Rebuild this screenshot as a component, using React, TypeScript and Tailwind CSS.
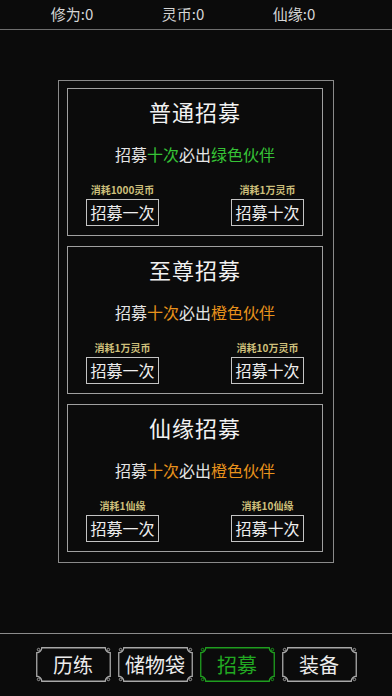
import React from 'react'

const FONT = { fontFamily: '"Noto Sans CJK SC", "Noto Sans", sans-serif' }

const GREEN = 'text-[#36c236]'
const ORANGE = 'text-[#e8921c]'

type Pool = {
  title: string
  color: 'green' | 'orange'
  prize: string
  costOne: string
  costTen: string
}

const pools: Pool[] = [
  { title: '普通招募', color: 'green', prize: '绿色伙伴', costOne: '消耗1000灵币', costTen: '消耗1万灵币' },
  { title: '至尊招募', color: 'orange', prize: '橙色伙伴', costOne: '消耗1万灵币', costTen: '消耗10万灵币' },
  { title: '仙缘招募', color: 'orange', prize: '橙色伙伴', costOne: '消耗1仙缘', costTen: '消耗10仙缘' },
]

function TabFrame({ stroke }: { stroke: string }) {
  const a = 0.75
  const W = 75 - a
  const H = 35 - a
  const r = 5
  const d = `M ${a + r} ${a} H ${W - r} A ${r} ${r} 0 0 0 ${W} ${a + r} V ${H - r} A ${r} ${r} 0 0 0 ${W - r} ${H} H ${a + r} A ${r} ${r} 0 0 0 ${a} ${H - r} V ${a + r} A ${r} ${r} 0 0 0 ${a + r} ${a} Z`
  return (
    <svg className="absolute inset-0" width="75" height="35" viewBox="0 0 75 35" fill="none">
      <path d={d} stroke={stroke} strokeWidth="1.3" />
      <circle cx="2.6" cy="2.6" r="1.3" stroke={stroke} strokeWidth="0.9" />
      <circle cx="72.4" cy="2.6" r="1.3" stroke={stroke} strokeWidth="0.9" />
      <circle cx="2.6" cy="32.4" r="1.3" stroke={stroke} strokeWidth="0.9" />
      <circle cx="72.4" cy="32.4" r="1.3" stroke={stroke} strokeWidth="0.9" />
    </svg>
  )
}

function Tab({ label, active }: { label: string; active?: boolean }) {
  return (
    <div className="relative w-[75px] h-[35px] flex items-center justify-center bg-[#0b0b0b]">
      <TabFrame stroke={active ? '#1f9e1f' : '#a8a8a8'} />
      <span className={`relative text-[20px] leading-none ${active ? 'text-[#22a822]' : 'text-[#ececec]'}`}>
        {label}
      </span>
    </div>
  )
}

function DrawButton({ cost, label }: { cost: string; label: string }) {
  return (
    <div className="flex flex-col items-center w-[73px]">
      <div className="h-[12px] leading-[12px] text-[10px] font-bold text-[#cfc07c] whitespace-nowrap">{cost}</div>
      <div className="mt-[3px] w-[73px] h-[27px] border-[1.5px] border-[#c4c4c4] flex items-center justify-center text-[16px] leading-none text-[#eeeeee]">
        {label}
      </div>
    </div>
  )
}

function PoolCard({ pool }: { pool: Pool }) {
  const hl = pool.color === 'green' ? GREEN : ORANGE
  return (
    <div className="w-[256px] h-[148px] border-[1.5px] border-[#a0a0a0] flex flex-col items-center pt-[10px]">
      <div className="h-[24px] leading-[24px] text-[22px] text-[#f2f2f2] tracking-[1px]">{pool.title}</div>
      <div className="mt-[21px] h-[20px] leading-[20px] text-[16px] text-[#e4e4e4]">
        招募<span className={hl}>十次</span>必出<span className={hl}>{pool.prize}</span>
      </div>
      <div className="mt-[20px] w-full flex justify-between px-[18px]">
        <DrawButton cost={pool.costOne} label="招募一次" />
        <DrawButton cost={pool.costTen} label="招募十次" />
      </div>
    </div>
  )
}

export default function App() {
  return (
    <div className="w-[392px] h-[696px] bg-[#0b0b0b] flex flex-col overflow-hidden" style={FONT}>
      {/* Header */}
      <div className="h-[30px] border-b border-[#6e6e6e] flex items-center pl-[22px] gap-[11px] text-[15px] text-[#d6d6d6]">
        <div className="w-[100px] text-center">修为:0</div>
        <div className="w-[100px] text-center">灵币:0</div>
        <div className="w-[100px] text-center">仙缘:0</div>
      </div>

      {/* Main Content */}
      <div className="flex-1">
        <div className="mt-[50px] ml-[58px] w-[276px] border-[1.5px] border-[#8a8a8a] pt-[6.5px] pb-[10px] pl-[8px] flex flex-col gap-[10px]">
          {pools.map((p) => (
            <PoolCard key={p.title} pool={p} />
          ))}
        </div>
      </div>

      {/* Bottom Tabs */}
      <div className="h-[63px] border-t-[1.5px] border-[#8c8c8c] flex justify-center gap-[7px] pt-[13px]">
        <Tab label="历练" />
        <Tab label="储物袋" />
        <Tab label="招募" active />
        <Tab label="装备" />
      </div>
    </div>
  )
}
